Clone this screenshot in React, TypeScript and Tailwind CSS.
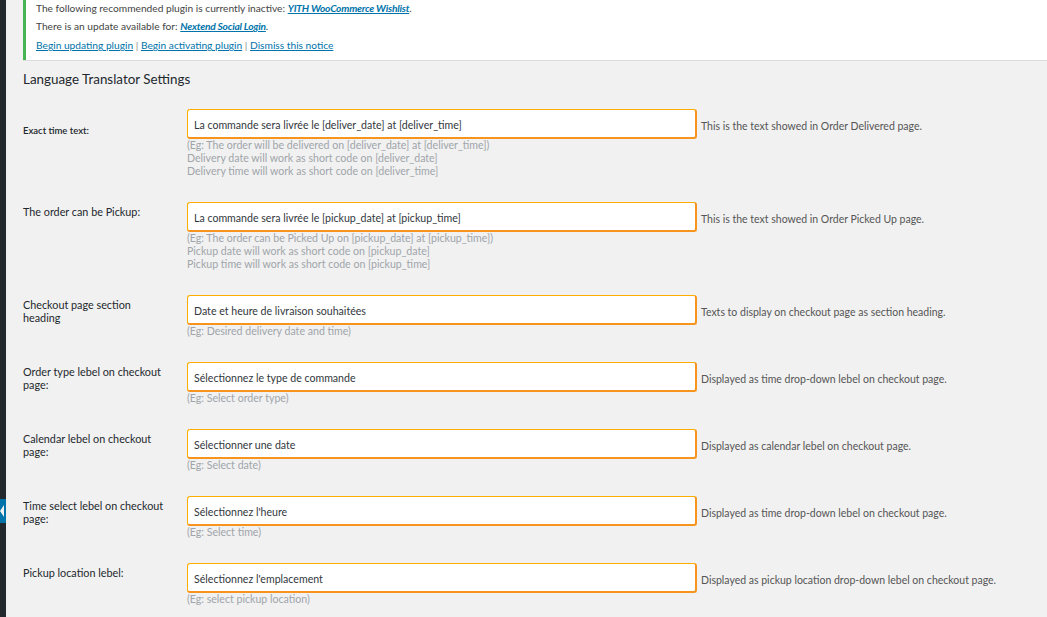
import React from 'react';

interface SettingRow {
  id: string;
  label: string;
  value: string;
  hints: string[];
  description: string;
  labelClass?: string;
}

const rows: SettingRow[] = [
  {
    id: 'exact',
    label: 'Exact time text:',
    value: 'La commande sera livrée le [deliver_date] at [deliver_time]',
    hints: [
      '(Eg: The order will be delivered on [deliver_date] at [deliver_time])',
      'Delivery date will work as short code on [deliver_date]',
      'Delivery time will work as short code on [deliver_time]',
    ],
    description: 'This is the text showed in Order Delivered page.',
    labelClass: 'pt-[27px] text-[9.5px] font-semibold',
  },
  {
    id: 'pickup',
    label: 'The order can be Pickup:',
    value: 'La commande sera livrée le [pickup_date] at [pickup_time]',
    hints: [
      '(Eg: The order can be Picked Up on [pickup_date] at [pickup_time])',
      'Pickup date will work as short code on [pickup_date]',
      'Pickup time will work as short code on [pickup_time]',
    ],
    description: 'This is the text showed in Order Picked Up page.',
  },
  {
    id: 'heading',
    label: 'Checkout page section heading',
    value: 'Date et heure de livraison souhaitées',
    hints: ['(Eg: Desired delivery date and time)'],
    description: 'Texts to display on checkout page as section heading.',
  },
  {
    id: 'ordertype',
    label: 'Order type lebel on checkout page:',
    value: 'Sélectionnez le type de commande',
    hints: ['(Eg: Select order type)'],
    description: 'Displayed as time drop-down lebel on checkout page.',
  },
  {
    id: 'calendar',
    label: 'Calendar lebel on checkout page:',
    value: 'Sélectionner une date',
    hints: ['(Eg: Select date)'],
    description: 'Displayed as calendar lebel on checkout page.',
  },
  {
    id: 'time',
    label: 'Time select lebel on checkout page:',
    value: "Sélectionnez l'heure",
    hints: ['(Eg: Select time)'],
    description: 'Displayed as time drop-down lebel on checkout page.',
  },
  {
    id: 'location',
    label: 'Pickup location lebel:',
    value: "Sélectionnez l'emplacement",
    hints: ['(Eg: select pickup location)'],
    description: 'Displayed as pickup location drop-down lebel on checkout page.',
  },
];

function AdminStrip(): JSX.Element {
  return (
    <div className="w-[6px] shrink-0 bg-[#23282d] flex flex-col">
      <div className="h-[499px]" />
      <svg width="6" height="24" viewBox="0 0 6 24" className="block">
        <rect width="6" height="24" fill="#0073aa" />
        <polygon points="4,6 0,12 4,18" fill="#f1f1f1" />
      </svg>
    </div>
  );
}

function PluginNotice(): JSX.Element {
  return (
    <div className="bg-white border-l-[3px] border-[#46b450] pl-[10px] pb-[5px] shadow-[0_1px_0_#dcdcdc] text-[10.2px] text-[#444]">
      <p className="h-[17px] leading-[17px]">
        The following recommended plugin is currently inactive:{' '}
        <a className="text-[#0073aa] underline font-bold italic tracking-[-0.2px]">YITH WooCommerce Wishlist</a>.
      </p>
      <p className="h-[19px] leading-[19px]">
        There is an update available for:{' '}
        <a className="text-[#0073aa] underline font-bold italic tracking-[-0.2px]">Nextend Social Login</a>.
      </p>
      <p className="h-[19px] leading-[19px]">
        <a className="text-[#0073aa] underline">Begin updating plugin</a>
        <span className="text-[#888]"> | </span>
        <a className="text-[#0073aa] underline">Begin activating plugin</a>
        <span className="text-[#888]"> | </span>
        <a className="text-[#0073aa] underline">Dismiss this notice</a>
      </p>
    </div>
  );
}

function SettingField({ row }: { row: SettingRow }): JSX.Element {
  return (
    <div className="flex">
      <div
        className={`w-[164px] shrink-0 pr-[20px] leading-[13px] text-[#23282d] ${
          row.labelClass ?? 'pt-[15px] text-[10.8px]'
        }`}
      >
        {row.label}
      </div>
      <div className="py-[12px]">
        <div className="flex items-center">
          <input
            readOnly
            value={row.value}
            className="w-[510px] h-[30px] bg-white rounded-[3px] border border-[#ffae00] border-b-2 border-r-2 border-b-[#f7941e] border-r-[#f7941e] pl-[6px] pt-[2px] text-[10.6px] text-[#32373c] outline-none"
          />
          <span className="ml-[4px] pt-[5px] text-[10.5px] text-[#555]">{row.description}</span>
        </div>
        {row.hints.map((hint) => (
          <p key={hint} className="leading-[13px] h-[13px] text-[10.6px] text-[#a0a5aa]">
            {hint}
          </p>
        ))}
      </div>
    </div>
  );
}

export default function App(): JSX.Element {
  return (
    <div className="flex w-full h-[617px] overflow-hidden bg-[#f1f1f1] font-['Lato',sans-serif]">
      <AdminStrip />
      <main className="flex-1 pl-[17px]">
        <PluginNotice />
        <h2 className="mt-[11px] leading-[16px] text-[13.4px] text-[#23282d]">Language Translator Settings</h2>
        <div className="mt-[10px]">
          {rows.map((row) => (
            <SettingField key={row.id} row={row} />
          ))}
        </div>
      </main>
    </div>
  );
}
